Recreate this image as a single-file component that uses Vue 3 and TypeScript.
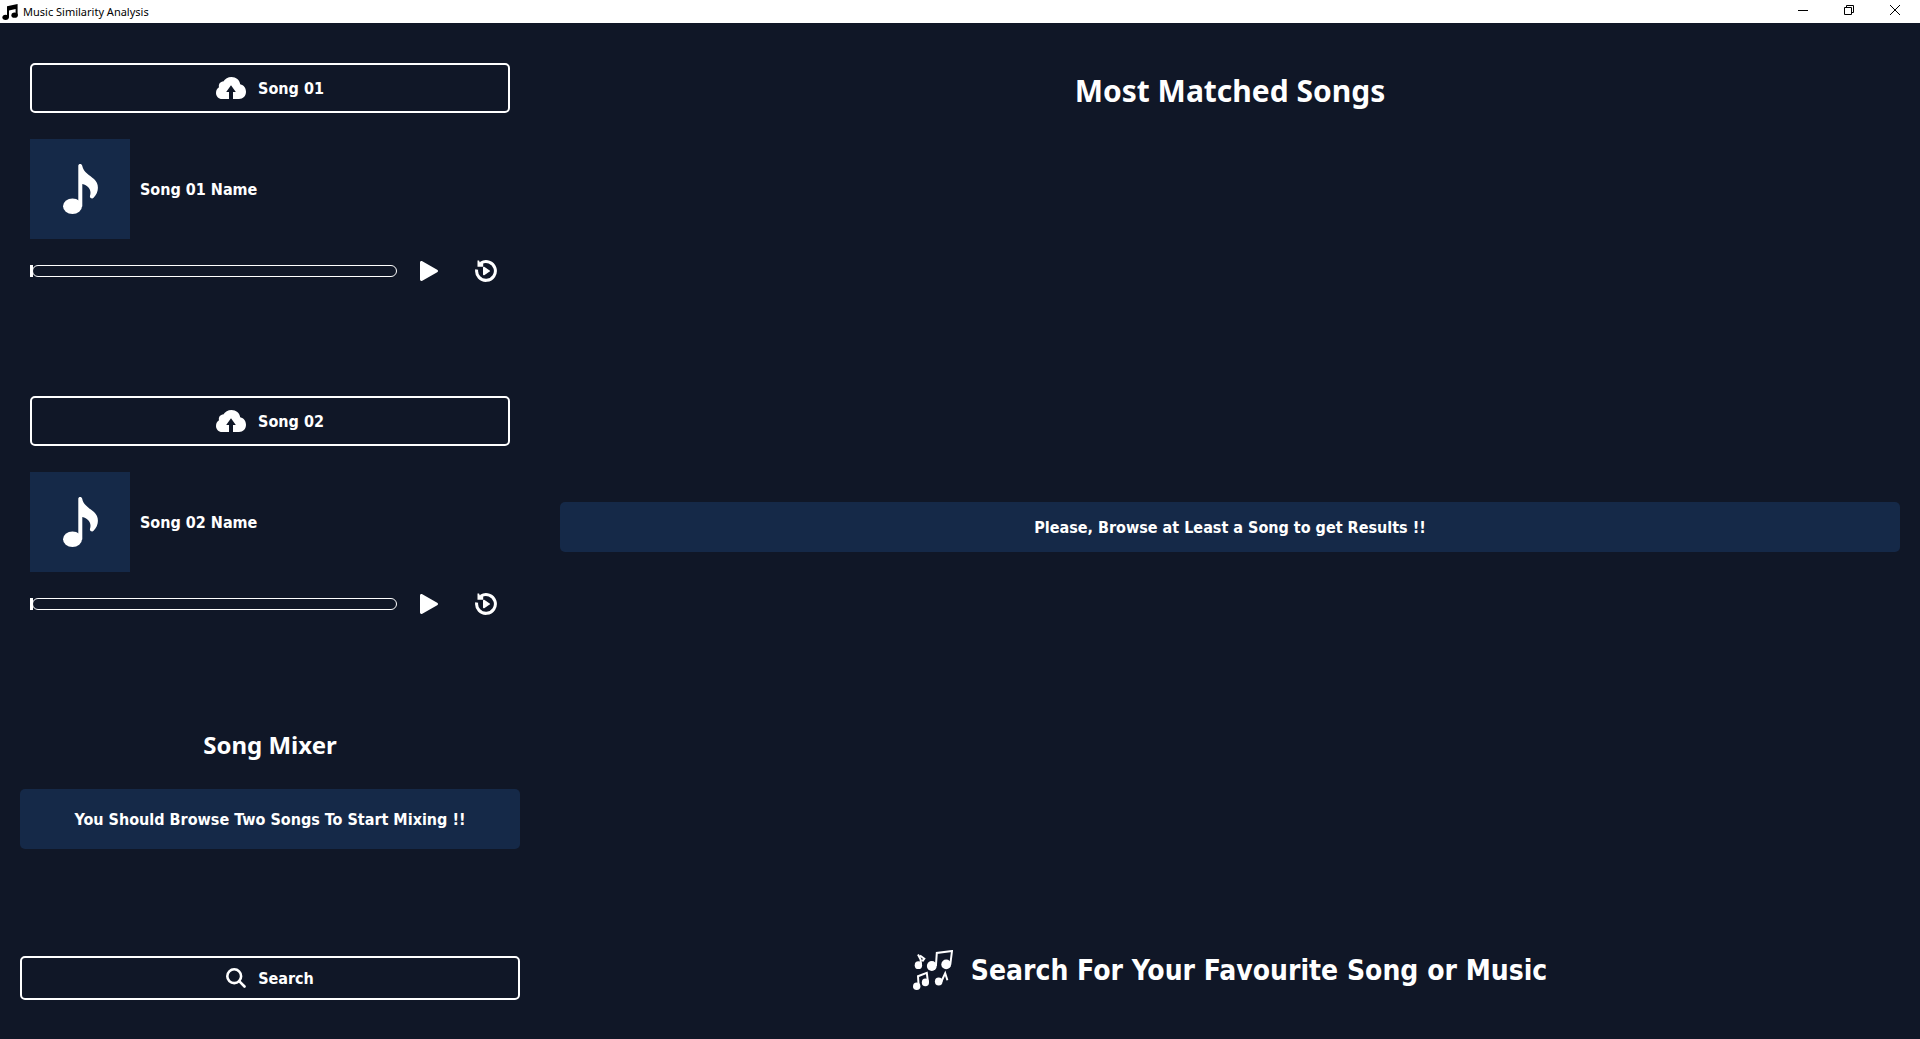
<script setup lang="ts">
import { reactive, ref } from 'vue'

interface Deck {
  id: string
  label: string
  name: string
  position: number
}

const decks = reactive<Deck[]>([
  { id: 'song-1', label: 'Song 01', name: 'Song 01 Name', position: 0 },
  { id: 'song-2', label: 'Song 02', name: 'Song 02 Name', position: 0 },
])

const mixerMessage = ref('You Should Browse Two Songs To Start Mixing !!')
const resultMessage = ref('Please, Browse at Least a Song to get Results !!')
</script>

<template>
  <div class="window">
    <header class="titlebar">
      <svg class="app-icon" viewBox="0 0 16 16" width="16" height="16" aria-hidden="true">
        <path d="M5 2.2 15.6 0v11.4h-2V5L7 6.4v7H5z" />
        <ellipse cx="3.6" cy="13.3" rx="3.2" ry="2.6" />
        <ellipse cx="12.6" cy="11.2" rx="3.2" ry="2.6" />
      </svg>
      <span class="app-name">Music Similarity Analysis</span>
      <div class="window-controls">
        <button type="button" aria-label="Minimize">
          <svg viewBox="0 0 10 10" width="10" height="10"><path d="M0 5.5h10" /></svg>
        </button>
        <button type="button" aria-label="Restore">
          <svg viewBox="0 0 10 10" width="10" height="10"><path d="M.5 2.5h7v7h-7zM2.5 2.5v-2h7v7h-2" /></svg>
        </button>
        <button type="button" aria-label="Close">
          <svg viewBox="0 0 10 10" width="10" height="10"><path d="M0 0l10 10M10 0 0 10" /></svg>
        </button>
      </div>
    </header>

    <div class="content">
      <aside class="sidebar">
        <section v-for="deck in decks" :key="deck.id" class="deck">
          <button type="button" class="outlined browse">
            <svg viewBox="0 0 30 22" width="30" height="22" aria-hidden="true">
              <path d="M6 22C2.500 22 0 19.300 0 16c0-2.700 1.200-4.500 3-5.700C2.200 7 4.500 4.600 7.300 4.600 9 1.800 12 0 15.500 0c4.500 0 8.100 3 8.700 7.200C28 8.200 30 11 30 14.800c0 4.200-3 7.200-7 7.200h-6v-7h2.800L15 8.300 10.200 15H13v7z" />
            </svg>
            <span class="label">{{ deck.label }}</span>
          </button>

          <div class="track">
            <div class="cover">
              <svg viewBox="0 0 35 50" width="35" height="50" aria-hidden="true">
                <ellipse cx="9.500" cy="42.300" rx="9.500" ry="7.700" />
                <path d="M15.300 1.800C15.300-.6 18.900-.6 19.200 1.800 20.500 8.500 27 11.500 31 15c5.500 5 5 13-.2 18.600-1.600 1.800-4.400.4-3.800-1.800C28.800 26 25.500 21.500 19.300 20v22.500h-4z" />
              </svg>
            </div>
            <span class="label">{{ deck.name }}</span>
          </div>

          <div class="player">
            <input v-model.number="deck.position" class="seek" type="range" min="0" max="100" :aria-label="`${deck.label} position`" />
            <button type="button" class="icon-button play" :aria-label="`Play ${deck.label}`">
              <svg viewBox="0 0 18 20" width="18" height="20">
                <path d="M0 1.500C0 .3 1.200-.3 2.300.3l14.900 8.500c1.100.6 1.100 1.800 0 2.400L2.300 19.700c-1.100.6-2.300 0-2.300-1.200z" />
              </svg>
            </button>
            <button type="button" class="icon-button" :aria-label="`Replay ${deck.label}`">
              <svg viewBox="0 0 22 22" width="22" height="22">
                <path class="ring" d="M1.700 9.500A9.400 9.400 0 1 0 6 3" />
                <path d="M2.500.4h1.600l.6 1.900L8.200 1.500v5.200H2.500z" />
                <path d="M8 7.400C8 6.700 8.600 6.500 9.200 6.800l5.500 3.600c.5.400.5.900 0 1.200l-5.500 3.600c-.6.300-1.200.1-1.200-.6z" />
              </svg>
            </button>
          </div>
        </section>

        <section class="mixer">
          <h2>Song Mixer</h2>
          <p class="notice"><span class="label">{{ mixerMessage }}</span></p>
        </section>

        <button type="button" class="outlined search">
          <svg viewBox="0 0 20 20" width="20" height="20" aria-hidden="true">
            <circle cx="8.200" cy="8.200" r="6.900" />
            <path d="m13.200 13.200 5.300 5.300" />
          </svg>
          <span class="label">Search</span>
        </button>
      </aside>

      <main class="results">
        <h1>Most Matched Songs</h1>
        <div class="matches">
          <p class="notice"><span class="label">{{ resultMessage }}</span></p>
        </div>
        <footer class="tagline">
          <svg viewBox="0 0 40 40" width="40" height="40" aria-hidden="true">
            <ellipse cx="5.400" cy="15.200" rx="3.700" ry="3.900" />
            <path d="m8 15-.4-5.500L5 4.500m2 1 4.300 3.200-2 2.600" />
            <circle cx="18.800" cy="16" r="4.900" />
            <circle cx="33.200" cy="14.400" r="4.900" />
            <path d="m22.900 16 .9-13 15.200-2-1.700 13.500" />
            <ellipse cx="3.700" cy="36.200" rx="3.700" ry="3.800" />
            <ellipse cx="12.400" cy="32.400" rx="3.600" ry="3.800" />
            <path d="m5.600 35.500-.6-9.300 8.800-3.300 1.200 9.400" />
            <ellipse cx="25.700" cy="31.500" rx="3.800" ry="3.900" />
            <path d="m28.400 31.500 3.800-8.300 2.200 7" />
          </svg>
          <span class="label">Search For Your Favourite Song or Music</span>
        </footer>
      </main>
    </div>
  </div>
</template>

<style>
body {
  margin: 0;
  background: #101727;
}
</style>

<style scoped>
.window {
  --card: #152948;
  min-height: 100vh;
  display: flex;
  flex-direction: column;
  background: #101727;
  color: #fff;
  font-family: Tahoma, "DejaVu Sans Condensed", "Noto Sans", sans-serif;
  font-size: 16px;
  font-weight: 700;
  line-height: 20px;
}

.window * {
  box-sizing: border-box;
}

button {
  margin: 0;
  padding: 0;
  border: 0;
  background: none;
  color: inherit;
  font: inherit;
  cursor: pointer;
}

h1,
h2,
p {
  margin: 0;
}

h1,
h2 {
  font-family: Tahoma, "Noto Sans", sans-serif;
}

.label {
  padding-top: 2px;
}

.titlebar {
  flex: none;
  height: 23px;
  padding-left: 2px;
  display: flex;
  align-items: center;
  gap: 5px;
  background: #fff;
  color: #000;
  font-family: "Segoe UI", "Noto Sans", sans-serif;
  font-size: 11px;
  font-weight: 400;
}

.app-icon {
  flex: none;
}

.window-controls {
  margin-left: auto;
  padding-right: 2px;
  align-self: stretch;
  display: flex;
}

.window-controls button {
  width: 46px;
  height: 20px;
  display: grid;
  place-items: center;
}

.window-controls path {
  fill: none;
  stroke: #000;
}

.content {
  flex: 1;
  display: flex;
  gap: 40px;
  padding: 40px 20px 39px;
}

.sidebar {
  flex: 0 0 500px;
  display: flex;
  flex-direction: column;
}

.deck {
  padding: 0 10px;
  margin-bottom: 113px;
}

.outlined {
  width: 100%;
  display: flex;
  align-items: center;
  justify-content: center;
  gap: 12px;
  border: 2px solid #fff;
  border-radius: 5px;
}

.outlined svg,
.cover svg,
.icon-button svg {
  flex: none;
  display: block;
  fill: #fff;
}

.browse {
  height: 50px;
}

.track {
  margin-top: 26px;
  display: flex;
  align-items: center;
  gap: 10px;
}

.cover {
  width: 100px;
  height: 100px;
  display: grid;
  place-items: center;
  background: var(--card);
}

.player {
  margin-top: 20px;
  height: 24px;
  display: flex;
  align-items: center;
}

.seek {
  appearance: none;
  flex: 1;
  min-width: 0;
  height: 12px;
  margin: 0 12px 0 0;
  background: none;
}

.seek::-webkit-slider-runnable-track {
  height: 12px;
  margin-left: 2px;
  border: 1px solid #fff;
  border-radius: 6px;
}

.seek::-webkit-slider-thumb {
  appearance: none;
  width: 3px;
  height: 12px;
  margin: -1px 0 0 -3px;
  background: #fff;
}

.icon-button {
  width: 48px;
  height: 24px;
  display: grid;
  place-items: center;
}

.play {
  width: 40px;
  margin-right: 13px;
}

.ring {
  fill: none;
  stroke: #fff;
  stroke-width: 3;
}

.mixer {
  text-align: center;
}

.mixer h2 {
  font-size: 24px;
  line-height: 32px;
}

.notice {
  display: flex;
  align-items: center;
  justify-content: center;
  border-radius: 5px;
  background: var(--card);
}

.mixer .notice {
  height: 60px;
  margin-top: 28px;
}

.search {
  height: 44px;
  margin-top: auto;
}

.search svg {
  fill: none;
  stroke: #fff;
  stroke-width: 2.600;
  stroke-linecap: round;
}

.results {
  flex: 1;
  min-width: 0;
  display: flex;
  flex-direction: column;
}

.results h1 {
  font-size: 30px;
  line-height: 56px;
  text-align: center;
}

.matches {
  flex: 1;
  display: flex;
  flex-direction: column;
  justify-content: center;
}

.results .notice {
  height: 50px;
}

.tagline {
  height: 66px;
  padding-top: 6px;
  display: flex;
  align-items: center;
  justify-content: center;
  gap: 18px;
  font-size: 28px;
}

.tagline svg {
  flex: none;
}

.tagline ellipse,
.tagline circle {
  fill: #fff;
}

.tagline path {
  fill: none;
  stroke: #fff;
  stroke-width: 2;
}
</style>
